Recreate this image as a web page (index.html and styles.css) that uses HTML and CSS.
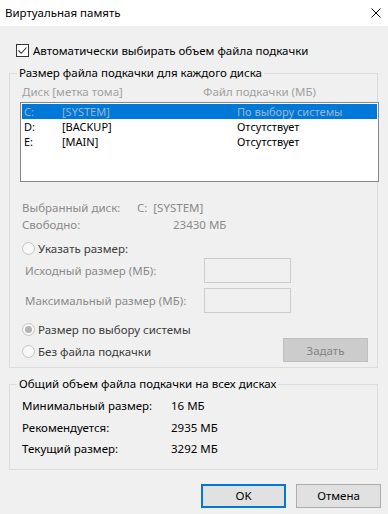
FILE: index.html
```html
<!DOCTYPE html>
<html lang="ru">
<head>
  <meta charset="UTF-8">
  <title>Виртуальная память</title>
  <link rel="stylesheet" href="styles.css">
</head>
<body>
  <div class="titlebar">
    <span class="title">Виртуальная память</span>
    <svg class="close" width="10" height="10" viewBox="0 0 10 10">
      <path d="M0.5 0.5 L9.5 9.5 M9.5 0.5 L0.5 9.5" stroke="#000" stroke-width="1"/>
    </svg>
  </div>

  <div class="content">
    <label class="check-row">
      <span class="checkbox">
        <svg width="11" height="11" viewBox="0 0 11 11">
          <path d="M1.5 5.5 L4.2 8.3 L9.5 2.5" fill="none" stroke="#333" stroke-width="1.1"/>
        </svg>
      </span>
      Автоматически выбирать объем файла подкачки
    </label>

    <fieldset class="group">
      <legend>Размер файла подкачки для каждого диска</legend>
      <div class="list-head">
        <span>Диск [метка тома]</span>
        <span>Файл подкачки (МБ)</span>
      </div>
      <div class="listbox">
        <div class="list-row selected"><span>C:</span><span>[SYSTEM]</span><span>По выбору системы</span></div>
        <div class="list-row"><span>D:</span><span>[BACKUP]</span><span>Отсутствует</span></div>
        <div class="list-row"><span>E:</span><span>[MAIN]</span><span>Отсутствует</span></div>
      </div>

      <div class="info">
        <div class="info-row"><span class="info-label">Выбранный диск:</span><span>C:&nbsp; [SYSTEM]</span></div>
        <div class="info-row"><span class="info-label">Свободно:</span><span class="free">23430 МБ</span></div>
      </div>

      <div class="radio-row first">
        <span class="radio"></span>Указать размер:
      </div>
      <div class="size-row">
        <span>Исходный размер (МБ):</span>
        <span class="field"></span>
      </div>
      <div class="size-row">
        <span>Максимальный размер (МБ):</span>
        <span class="field"></span>
      </div>

      <div class="bottom-row">
        <div class="radios">
          <div class="radio-row"><span class="radio checked"></span>Размер по выбору системы</div>
          <div class="radio-row"><span class="radio"></span>Без файла подкачки</div>
        </div>
        <span class="btn disabled">Задать</span>
      </div>
    </fieldset>

    <fieldset class="group total">
      <legend>Общий объем файла подкачки на всех дисках</legend>
      <div class="total-row"><span>Минимальный размер:</span><span>16 МБ</span></div>
      <div class="total-row"><span>Рекомендуется:</span><span>2935 МБ</span></div>
      <div class="total-row"><span>Текущий размер:</span><span>3292 МБ</span></div>
    </fieldset>

    <div class="buttons">
      <span class="btn default">OK</span>
      <span class="btn">Отмена</span>
    </div>
  </div>
</body>
</html>
```

FILE: styles.css
```css
body {
    margin: 0;
    background: #f0f0f0;
    font-family: "Noto Sans", "Open Sans", sans-serif;
    font-size: 11.5px;
    color: #000;
    width: 388px;
    height: 514px;
    overflow: hidden;
}
.titlebar {
    height: 26px;
    background: #fff;
    display: flex;
    align-items: center;
    justify-content: space-between;
    padding: 0 7px 0 5px;
}
.title {
    line-height: 16px;
}
.close {
    display: block;
}
.content {
    padding: 16px 10px 0 9px;
}
.check-row {
    display: flex;
    align-items: center;
    height: 16px;
    padding-left: 7px;
}
.checkbox {
    width: 11px;
    height: 11px;
    border: 1px solid #333;
    background: #fff;
    margin-right: 4px;
    display: block;
}
.checkbox svg {
    display: block;
}

/* group boxes */
.group {
    margin: 7px 0 0;
    padding: 0 0 5px 10px;
    border: 1px solid #dcdcdc;
    min-width: 0;
}
.group legend {
    margin-left: -3px;
    padding: 0 2px;
    line-height: 16px;
}
.list-head {
    display: flex;
    color: #a0a0a0;
    line-height: 16px;
    margin-top: 3px;
    padding-left: 2px;
}
.list-head span:first-child {
    width: 181px;
}
.listbox {
    margin: 2px -2px 0 0;
    height: 76px;
    border: 1px solid #828790;
    background: #fff;
    padding: 1px;
}
.list-row {
    display: grid;
    grid-template-columns: 38px 175px 1fr;
    height: 15px;
    line-height: 15px;
    font-size: 11px;
    padding-left: 2px;
}
.list-row.selected {
    background: #0078d7;
    color: #9db6cf;
}
.info {
    margin-top: 17px;
    color: #8a8a8a;
    padding-left: 2px;
}
.info-row {
    display: flex;
    line-height: 17px;
}
.info-label {
    width: 115px;
}
.free {
    padding-left: 36px;
}
.radio-row {
    display: flex;
    align-items: center;
    height: 16px;
    color: #3c3c3c;
    padding-left: 2px;
}
.radio-row.first {
    margin-top: 7px;
}
.radio {
    box-sizing: border-box;
    width: 13px;
    height: 13px;
    border: 1px solid #c4c4c4;
    border-radius: 50%;
    background: #f7f7f7;
    margin-right: 3px;
    display: flex;
    align-items: center;
    justify-content: center;
}
.radio.checked::after {
    content: "";
    width: 7px;
    height: 7px;
    border-radius: 50%;
    background: #b4b4b4;
}
.size-row {
    display: flex;
    align-items: center;
    height: 25px;
    color: #8a8a8a;
    padding-left: 5px;
    margin-top: 2px;
}
.size-row + .size-row {
    margin-top: 5px;
}
.size-row span:first-child {
    width: 179px;
}
.field {
    width: 87px;
    height: 25px;
    box-sizing: border-box;
    border: 1px solid #cccccc;
}
.bottom-row {
    display: flex;
    justify-content: space-between;
    align-items: flex-end;
    margin-top: 8px;
    padding-right: 9px;
}
.radios {
    display: flex;
    flex-direction: column;
    gap: 6px;
    padding-bottom: 3px;
}
.btn {
    width: 85px;
    height: 24px;
    box-sizing: border-box;
    border: 1px solid #adadad;
    background: #e1e1e1;
    display: flex;
    align-items: center;
    justify-content: center;
}
.btn.disabled {
    border-color: #bfbfbf;
    background: #cccccc;
    color: #838383;
}
.btn.default {
    border: 2px solid #0078d7;
}

/* totals */
.total {
    margin-top: 8px;
    padding-bottom: 9px;
    padding-left: 12px;
}
.total legend {
    margin-left: -5px;
}
.total-row {
    display: flex;
    height: 21.5px;
    align-items: center;
}
.total-row:first-of-type {
    margin-top: 3px;
}
.total-row span:first-child {
    width: 149px;
}
.buttons {
    display: flex;
    justify-content: flex-end;
    gap: 10px;
    margin: 14px -3px 0 0;
}
```
